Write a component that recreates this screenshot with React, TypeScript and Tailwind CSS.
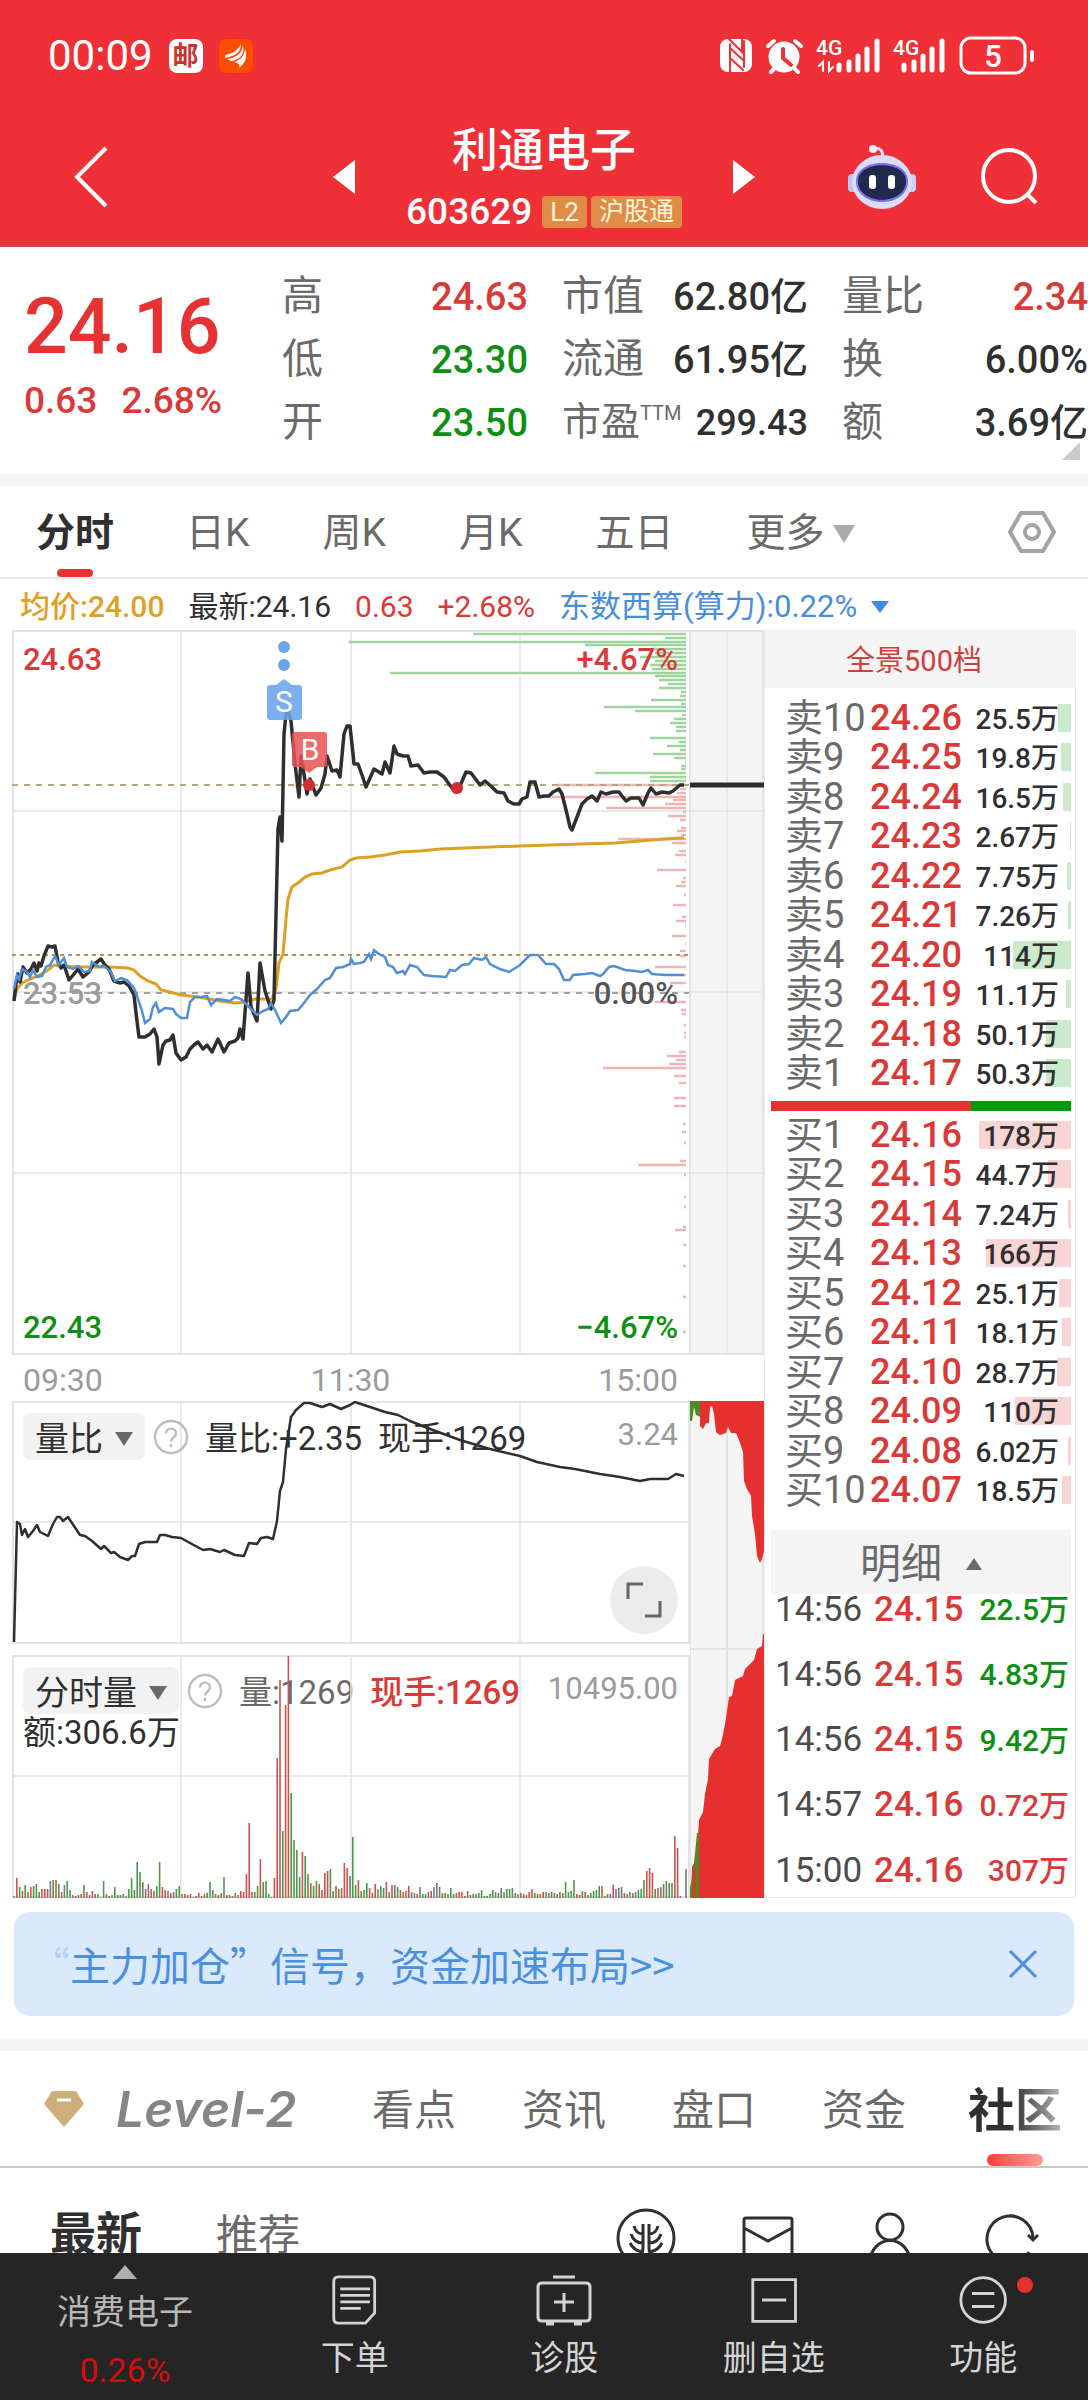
import React from 'react';
import clsx from 'clsx';

type Tone = 'red' | 'green' | 'ink';

const toneClass: Record<Tone, string> = {
  red: 'text-[#d93a38]',
  green: 'text-[#0d8f12]',
  ink: 'text-[#303030]',
};

const quoteColumns: { label: string; sup?: string; value: string; tone: Tone }[][] = [
  [
    { label: '高', value: '24.63', tone: 'red' },
    { label: '低', value: '23.30', tone: 'green' },
    { label: '开', value: '23.50', tone: 'green' },
  ],
  [
    { label: '市值', value: '62.80亿', tone: 'ink' },
    { label: '流通', value: '61.95亿', tone: 'ink' },
    { label: '市盈', sup: 'TTM', value: '299.43', tone: 'ink' },
  ],
  [
    { label: '量比', value: '2.34', tone: 'red' },
    { label: '换', value: '6.00%', tone: 'ink' },
    { label: '额', value: '3.69亿', tone: 'ink' },
  ],
];

// label, price, volume, depth bar width
type Level = [string, string, string, number];

const asks: Level[] = [
  ['卖10', '24.26', '25.5万', 13],
  ['卖9', '24.25', '19.8万', 10],
  ['卖8', '24.24', '16.5万', 8],
  ['卖7', '24.23', '2.67万', 1],
  ['卖6', '24.22', '7.75万', 4],
  ['卖5', '24.21', '7.26万', 3],
  ['卖4', '24.20', '114万', 58],
  ['卖3', '24.19', '11.1万', 5],
  ['卖2', '24.18', '50.1万', 25],
  ['卖1', '24.17', '50.3万', 25],
];

const bids: Level[] = [
  ['买1', '24.16', '178万', 92],
  ['买2', '24.15', '44.7万', 23],
  ['买3', '24.14', '7.24万', 3],
  ['买4', '24.13', '166万', 85],
  ['买5', '24.12', '25.1万', 12],
  ['买6', '24.11', '18.1万', 9],
  ['买7', '24.10', '28.7万', 14],
  ['买8', '24.09', '110万', 56],
  ['买9', '24.08', '6.02万', 3],
  ['买10', '24.07', '18.5万', 9],
];

const trades: [string, string, string, Tone][] = [
  ['14:56', '24.15', '22.5万', 'green'],
  ['14:56', '24.15', '4.83万', 'green'],
  ['14:56', '24.15', '9.42万', 'green'],
  ['14:57', '24.16', '0.72万', 'red'],
  ['15:00', '24.16', '307万', 'red'],
];

const PRICE =
  '14,1002 16,985 18,975 20,983 23,968 27,974 31,970 34,964 37,972 39,964 41,967 44,957 48,947 52,948 55,947 58,963 61,969 64,966 69,981 74,975 78,970 83,978 89,973 93,966 97,963 101,960 105,966 109,970 114,982 120,984 124,983 129,987 134,996 136,1014 139,1038 145,1038 150,1035 154,1030 157,1038 159,1065 163,1046 166,1042 170,1041 173,1036 176,1054 181,1061 186,1058 190,1050 194,1046 198,1043 203,1050 207,1046 212,1053 218,1040 224,1053 229,1044 235,1042 238,1039 240,1030 243,1040 248,974 251,1008 257,1022 260,964 265,992 271,1010 274,1001 278,830 280,818 282,842 284,735 286,715 288,711 291,722 295,765 299,798 301,757 304,775 307,795 310,780 313,788 316,796 321,789 325,775 327,757 332,772 337,771 340,778 344,735 347,727 350,727 353,755 354,765 358,765 362,776 366,788 374,770 382,775 385,763 390,774 394,747 397,755 403,757 408,757 411,767 418,766 424,774 430,773 437,773 444,778 449,785 455,793 460,787 466,773 471,774 480,786 485,782 492,788 497,793 504,794 508,802 514,805 519,805 522,800 527,798 530,783 535,783 539,798 544,797 549,797 553,793 559,790 562,795 567,815 570,828 572,831 577,818 582,805 587,800 592,797 597,802 601,793 606,795 613,793 619,793 622,797 626,802 631,799 639,799 643,806 648,794 651,789 656,795 662,793 669,794 673,792 680,786 684,786';

const AVERAGE =
  '14,1000 17,990 22,984 30,980 40,976 48,971 54,966 60,967 80,968 110,968 128,969 134,971 140,977 148,982 156,985 161,991 170,993 181,996 198,998 210,1000 220,1002 235,1004 245,1003 255,1000 272,1000 276,990 279,964 283,955 286,920 288,900 292,888 298,884 305,878 312,875 322,874 330,871 342,868 350,861 356,859 370,858 385,856 400,853 420,852 440,850 465,849 490,848 520,847 550,846 580,845 615,844 640,842 665,840 680,839 684,839';

const SECTOR =
  '14,990 17,976 19,980 22,970 27,973 30,978 33,971 37,978 42,977 46,968 50,966 55,957 59,966 64,959 67,968 73,970 78,967 84,973 90,972 92,963 99,968 104,967 110,972 115,982 121,979 127,981 134,989 138,1000 142,1012 145,1024 150,1020 153,1008 156,1004 159,1013 165,1009 173,1010 176,1015 181,1019 187,1019 190,1003 195,998 202,998 207,997 211,1006 217,1000 224,1001 230,1002 235,998 241,1000 246,1005 251,1010 257,1016 263,1012 268,1010 271,1004 276,1013 281,1024 286,1018 290,1012 298,1011 304,1004 310,996 317,990 325,981 330,979 336,969 343,968 350,965 351,960 354,965 360,964 364,963 369,955 371,960 374,951 379,955 385,958 388,966 393,968 397,974 403,972 405,975 410,966 417,968 424,976 432,977 446,978 450,971 455,972 462,966 469,965 474,959 482,961 486,958 490,965 500,970 509,973 520,966 530,956 538,956 546,965 554,965 559,970 564,981 570,981 573,976 585,975 592,974 600,977 603,975 609,968 614,967 625,971 635,972 642,973 648,971 652,975 665,976 684,976';

const RATIO =
  '14,1643 17,1523 20,1525 22,1536 25,1530 28,1538 33,1532 37,1526 40,1533 48,1537 53,1525 57,1518 60,1518 63,1522 68,1518 72,1524 80,1536 85,1537 92,1542 101,1550 104,1547 111,1554 114,1553 120,1558 128,1561 132,1557 135,1557 139,1545 145,1543 157,1543 160,1536 165,1536 172,1538 181,1539 190,1544 203,1551 210,1550 220,1553 224,1551 235,1556 244,1557 249,1544 257,1545 261,1539 267,1538 273,1540 277,1522 280,1492 283,1483 286,1450 291,1418 296,1411 304,1404 310,1404 322,1408 330,1405 341,1410 350,1406 355,1403 370,1408 385,1413 398,1416 410,1422 430,1430 460,1441 490,1450 520,1457 537,1463 560,1468 575,1470 600,1475 620,1478 640,1482 650,1480 668,1480 676,1475 684,1477';

// [y, left edge] of each price level in the volume profile
const profileAsk = [
  [635, 473], [639, 665], [643, 349], [646, 585], [650, 650], [654, 655], [658, 640], [662, 655], [666, 650], [670, 652],
  [674, 390], [677, 655], [681, 659], [685, 668], [689, 659], [693, 681], [697, 680], [701, 651], [705, 681], [708, 604],
  [712, 635], [716, 682], [720, 674], [724, 670], [728, 676], [732, 676], [739, 650], [743, 679], [747, 667], [751, 680],
  [755, 653], [759, 674], [763, 685], [767, 681], [770, 681], [774, 595], [778, 650], [782, 650],
];
const profileBid = [
  [786, 556], [790, 680], [794, 677], [798, 552], [801, 673], [805, 665], [809, 606], [813, 683], [817, 668], [821, 680],
  [829, 681], [832, 677], [836, 681], [840, 618], [844, 672], [852, 679], [856, 675], [863, 685], [871, 657], [879, 683],
  [883, 681], [887, 676], [896, 684], [906, 673], [918, 682], [922, 676], [926, 685], [937, 672], [945, 685], [952, 680],
  [957, 680], [968, 655], [976, 683], [984, 670], [1003, 655], [1011, 681], [1015, 682], [1026, 684], [1034, 684], [1038, 684],
  [1053, 679], [1057, 667], [1061, 676], [1065, 669], [1069, 603], [1077, 674], [1084, 679], [1099, 674], [1107, 674], [1125, 683],
  [1133, 682], [1144, 684], [1162, 680], [1166, 638], [1176, 684], [1198, 684], [1208, 684], [1228, 683], [1231, 675], [1246, 683],
  [1267, 683], [1298, 683], [1333, 683],
];

// minute volume: r up, g down, k flat, followed by the bar height
const VOLUME = (
  'g2 r20 g11 r7 g13 g6 r11 g12 g14 g6 r9 r9 r9 k17 g18 r18 g14 r6 k13 g17 g8 r3 r2 k3 r4 g13 r6 k3 r7 k4 g4 r1 g17 k4 r2 g3 g11 k3 k3 g4 k2 ' +
  'g9 g20 k8 g36 g26 k16 k9 r14 k9 r7 g12 g36 r11 r8 k7 r5 k6 g9 g12 k4 r4 k3 r4 k1 r2 r5 k2 r4 g5 g16 g8 r4 r3 g5 g21 r3 k3 r2 g5 r3 r7 r6 ' +
  'r24 r75 r6 g6 g12 r39 g16 g17 g4 g1 r20 r140 r218 g67 r193 r242 g105 g58 g48 g21 r46 g42 g24 r15 g12 g17 r14 r8 r25 r27 g29 g7 r12 g9 r10 ' +
  'r35 r30 k22 g61 g13 r18 g7 g8 g15 r10 r5 r14 g9 k12 g10 r16 g6 r13 k13 g11 r8 g6 r7 r12 g6 k5 r4 k11 g4 g4 k6 r7 k11 k15 k11 r5 g5 g4 g10 ' +
  'g4 r5 r6 r6 g2 r7 g3 k4 g4 g5 g8 k2 g2 g4 g8 k6 g5 k10 g6 g9 g9 k10 g5 r4 g5 r4 k3 r6 r9 g5 r4 g4 r6 k6 g5 r6 k5 g4 r6 g5 g16 g6 g7 g18 ' +
  'r4 r3 g7 r6 k3 g5 g7 g8 g12 r12 r2 g4 k4 r13 k9 k10 k11 r5 k4 g6 k5 k6 g8 g9 g18 r27 r30 r25 g9 r10 g11 k14 k17 g15 g15 r62 r50 r2 k0 k29'
).split(' ');

const volumeColor: Record<string, string> = { r: '#d0504e', g: '#4a9a45', k: '#777777' };

const GRID = '#e3e3e3';

function Row({ level, side }: { level: Level; side: 'ask' | 'bid' }) {
  const [label, price, volume, depth] = level;
  return (
    <div className="relative flex flex-1 items-center pl-5 pr-4 leading-none">
      <div
        className={clsx('absolute right-1 h-7', side === 'ask' ? 'bg-[#cbe9cb]' : 'bg-[#f8d5d5]')}
        style={{ width: depth }}
      />
      <span className="relative w-[85px] whitespace-nowrap text-[38px] text-[#6a6a6a]">{label}</span>
      <span className="relative text-[36px] font-medium text-[#d93a38]">{price}</span>
      <span className="relative ml-auto pt-1 text-[28px] font-medium text-[#303030]">{volume}</span>
    </div>
  );
}

function HelpIcon() {
  return (
    <svg viewBox="0 0 36 36" className="size-9 shrink-0" fill="none" stroke="#bdbdbd" strokeWidth="2.4">
      <circle cx="18" cy="18" r="16" />
      <path d="M13 14.5c0-6.5 10-6.5 10 0 0 4-5 4-5 8" />
      <path d="M18 25v3" />
    </svg>
  );
}

function StatusBar() {
  return (
    <div className="flex h-[112px] items-center pl-12 pr-[54px] text-white">
      <span className="text-[42px] leading-none">00:09</span>
      <span className="ml-4 flex size-[34px] items-center justify-center rounded-lg bg-white text-[26px] font-bold leading-none text-[#c8322f]">邮</span>
      <svg viewBox="0 0 34 34" className="ml-4 size-[34px]">
        <rect width="34" height="34" rx="8" fill="#ff4d00" />
        <path d="M6 16C13 15 18 12 22 5c0 7-4 12-16 14zM8 20c9-1 14-5 16-13 2 9-4 14-12 15zM15 23c7-2 10-6 11-13 3 9 0 14-6 19 1-3 0-5-5-6z" fill="#fff" />
      </svg>
      <svg viewBox="0 0 310 40" className="ml-auto h-10 w-[310px]" fill="none" stroke="#fff" strokeLinecap="round">
        <rect x="2" y="3" width="32" height="33" rx="8" fill="#fff" stroke="none" />
        <path d="M11 3L24 16V3M12 36V8M26 31V5M12 12l14 13M12 22l13 12" stroke="#f03037" strokeWidth="2" />
        <circle cx="66" cy="21" r="14" fill="#fff" strokeWidth="3" />
        <path d="M50 10l6-5M83 10l-6-5M56 33l-3 3M77 33l3 3" strokeWidth="4" />
        <path d="M65 13v9l8 7" stroke="#f03037" strokeWidth="4" />
        <path d="M121 29v5M131 26v8M140 20v14M149 13v21M159 5v29" strokeWidth="5" />
        <path d="M105 35V26l-4 4M111 26v9l4-4" strokeWidth="2" />
        <text x="98" y="19" fontSize="21" fontWeight="500" fill="#fff" stroke="none">4G</text>
        <path d="M186 29v5M196 26v8M205 20v14M214 13v21M224 5v29" strokeWidth="5" />
        <text x="175" y="19" fontSize="21" fontWeight="500" fill="#fff" stroke="none">4G</text>
        <rect x="243" y="2" width="64" height="35" rx="10" strokeWidth="3" />
        <text x="275" y="31" fontSize="31" fontWeight="500" textAnchor="middle" fill="#fff" stroke="none">5</text>
      </svg>
      <i className="ml-0.5 h-3 w-1 rounded-full bg-white" />
    </div>
  );
}

function TopBar() {
  return (
    <header className="relative flex h-[135px] items-center justify-between border-b-2 border-[#c9494b] pb-1 pl-[72px] pr-[48px] text-white">
      <button aria-label="返回">
        <svg viewBox="0 0 40 64" className="h-16 w-10" fill="none" stroke="#fff" strokeWidth="4">
          <path d="M34 3L5 32l29 29" />
        </svg>
      </button>
      <div className="absolute inset-x-0 flex items-center justify-center gap-[51px]">
        <button aria-label="上一只">
          <svg viewBox="0 0 22 34" className="h-[34px] w-[22px]" fill="#fff"><path d="M22 0v34L0 17z" /></svg>
        </button>
        <div className="flex flex-col items-center gap-5 pt-1 leading-none">
          <h1 className="text-[46px] font-medium">利通电子</h1>
          <div className="flex items-center gap-1">
            <span className="mr-1.5 text-[37px] font-medium">603629</span>
            <span className="flex h-8 items-center rounded-sm bg-[#e08c48] px-2 text-[26px] text-[#fff4dc]">L2</span>
            <span className="flex h-8 items-center rounded-sm bg-[#e08c48] px-2 text-[25px] text-[#fff4dc]">沪股通</span>
          </div>
        </div>
        <button aria-label="下一只">
          <svg viewBox="0 0 22 34" className="h-[34px] w-[22px]" fill="#fff"><path d="M0 0v34l22-17z" /></svg>
        </button>
      </div>
      <div className="relative flex items-center gap-[62px]">
        <button aria-label="智能助手">
          <svg viewBox="0 0 72 68" className="h-[68px] w-[72px]">
            <path d="M28 6c6-2 9 2 9 8" fill="none" stroke="#e9e6ff" strokeWidth="3" strokeLinecap="round" />
            <circle cx="27" cy="6" r="4" fill="#f1efff" />
            <rect x="2" y="31" width="9" height="18" rx="4" fill="#b9c6f5" />
            <rect x="61" y="31" width="9" height="18" rx="4" fill="#cbd0fa" />
            <ellipse cx="36" cy="39" rx="30" ry="27" fill="#dcdcfb" />
            <path d="M10 38c0-24 52-24 52 0 0 28-52 28-52 0z" fill="#7a6ff0" />
            <path d="M12 38c0-21 48-21 48 0 0 25-48 25-48 0z" fill="#202a4e" />
            <rect x="23" y="32" width="7" height="14" rx="3" fill="#fff" />
            <rect x="42" y="32" width="7" height="14" rx="3" fill="#fff" />
          </svg>
        </button>
        <button aria-label="搜索">
          <svg viewBox="0 0 60 60" className="size-[60px]" fill="none" stroke="#fff" strokeWidth="4">
            <circle cx="29" cy="29" r="26" />
            <path d="M47 47l9 9" />
          </svg>
        </button>
      </div>
    </header>
  );
}

function Quote() {
  return (
    <section className="relative flex h-[227px] gap-[34px] pl-6 leading-none">
      <div className="w-[224px] shrink-0 pt-[42px]">
        <div className="text-[77px] font-medium text-[#e63233]">24.16</div>
        <div className="mt-4 flex gap-6 text-[37px] font-medium text-[#d93a38]">
          <span>0.63</span>
          <span>2.68%</span>
        </div>
      </div>
      {quoteColumns.map((column) => (
        <dl key={column[0].label} className="flex flex-1 flex-col pt-[18px]">
          {column.map((item) => (
            <div key={item.label} className="flex h-[63px] items-center justify-between whitespace-nowrap">
              <dt className={clsx('flex text-[#6a6a6a]', item.sup ? 'text-[39px]' : 'text-[41px]')}>
                {item.label}
                {item.sup && <span className="text-[20px]">{item.sup}</span>}
              </dt>
              <dd className={clsx('font-medium', toneClass[item.tone], item.sup ? 'text-[36px]' : 'text-[38px]')}>{item.value}</dd>
            </div>
          ))}
        </dl>
      ))}
      <svg viewBox="0 0 18 18" className="absolute bottom-3.5 right-2 size-[18px]" fill="#cccccc"><path d="M18 0v18H0z" /></svg>
    </section>
  );
}

function PeriodTabs() {
  return (
    <nav className="flex h-[93px] items-center border-b-2 border-[#e8e8e8] pl-9 pr-8 text-[39px] leading-none text-[#6a6a6a]">
      <button className="relative flex h-full items-center pt-1 font-bold text-[#303030]">
        分时
        <i className="absolute bottom-0 left-1/2 h-2 w-9 -translate-x-1/2 rounded-full bg-[#e63233]" />
      </button>
      <div className="ml-[72px] flex gap-[73px] pt-1">
        <button>日K</button>
        <button>周K</button>
        <button>月K</button>
        <button>五日</button>
        <button className="flex items-center gap-2">
          更多
          <svg viewBox="0 0 22 18" className="h-[18px] w-[22px]" fill="#aaaaaa"><path d="M0 0h22L11 18z" /></svg>
        </button>
      </div>
      <button className="ml-auto" aria-label="设置">
        <svg viewBox="0 0 48 44" className="h-11 w-12" fill="none" stroke="#a3a3a3" strokeWidth="4" strokeLinejoin="round">
          <path d="M13 3h22l11 19-11 19H13L2 22z" />
          <circle cx="24" cy="22" r="7" />
        </svg>
      </button>
    </nav>
  );
}

function MainChart() {
  return (
    <div className="relative h-[725px] text-[31px] font-medium leading-none">
      <svg viewBox="12 631 752 725" preserveAspectRatio="none" className="h-full w-full" fill="none">
        <rect x="690" y="631" width="74" height="725" fill="#f4f4f4" />
        <path d="M181 631v724M351 631v724M520 631v724M727 631v724M12 812h752M12 993h752M12 1174h752" stroke={GRID} strokeWidth="1.500" />
        <path d="M12 632h752M12 1355h752M13 631v724M690 631v724M763 631v724" stroke={GRID} strokeWidth="2" />
        {profileAsk.map(([y, x]) => <path key={y} d={`M${x} ${y}H686`} stroke="#9fd49f" strokeWidth="2.500" />)}
        {profileBid.map(([y, x]) => <path key={y} d={`M${x} ${y}H686`} stroke="#efb4b4" strokeWidth="2.500" />)}
        <path d="M12 786h677" stroke="#b8a67c" strokeWidth="2" strokeDasharray="6 6" />
        <path d="M12 956h677" stroke="#c08c55" strokeWidth="2" strokeDasharray="4 4" />
        <path d="M24 994h665" stroke="#a0a0a0" strokeWidth="2" strokeDasharray="6 6" />
        <polyline points={AVERAGE} stroke="#dda024" strokeWidth="3" />
        <polyline points={PRICE} stroke="#2f2f2f" strokeWidth="3.500" strokeLinejoin="round" />
        <polyline points={SECTOR} stroke="#4f8fd8" strokeWidth="2.500" />
        <path d="M690 786h74" stroke="#2c2c2c" strokeWidth="5" />
        <g fill="#6ba4ed">
          <circle cx="284" cy="648" r="6" />
          <circle cx="284" cy="666" r="6" />
          <path d="M276 686l8-6 8 6h7q3 0 3 3v29q0 3-3 3h-29q-3 0-3-3v-29q0-3 3-3z" opacity=".88" />
        </g>
        <path d="M295 733h29q3 0 3 3v29q0 3-3 3h-7l-8 6-8-6h-6q-3 0-3-3v-29q0-3 3-3z" fill="#e95455" opacity=".86" />
        <circle cx="309" cy="786" r="6" fill="#d02f2f" />
        <circle cx="457" cy="789" r="6" fill="#d02f2f" />
        <text x="284" y="713" fontSize="30" fontWeight="400" textAnchor="middle" fill="#fff">S</text>
        <text x="310" y="761" fontSize="30" fontWeight="400" textAnchor="middle" fill="#fff">B</text>
      </svg>
      <div className="absolute inset-y-0 left-[11px] flex flex-col justify-between pb-3 pt-3.5">
        <span className="text-[#d93a38]">24.63</span>
        <span className="text-[#9b9b9b]">23.53</span>
        <span className="text-[#0d8f12]">22.43</span>
      </div>
      <div className="absolute inset-y-0 right-[86px] flex flex-col items-end justify-between pb-3 pt-3.5">
        <span className="text-[#d93a38]">+4.67%</span>
        <span className="text-[#555555]">0.00%</span>
        <span className="text-[#0d8f12]">−4.67%</span>
      </div>
    </div>
  );
}

function IndicatorHead({ name, children, max }: { name: string; children: React.ReactNode; max: string }) {
  return (
    <div className="absolute inset-x-0 top-3 flex items-start pl-[11px] pr-3">
      <div className="flex items-center gap-2">
        <button className="flex h-[47px] items-center gap-3 whitespace-nowrap rounded-lg bg-[#f2f2f2] px-3 pt-1 text-[34px]">
          {name}
          <svg viewBox="0 0 18 14" className="h-3.5 w-[18px]" fill="#6a6a6a"><path d="M0 0h18L9 14z" /></svg>
        </button>
        <HelpIcon />
        <div className="flex gap-4 whitespace-nowrap pl-2 pt-1">{children}</div>
      </div>
      <span className="ml-auto pt-1.5 text-[31px] text-[#9b9b9b]">{max}</span>
    </div>
  );
}

function SubCharts() {
  return (
    <div className="flex h-[497px] text-[33px] leading-none text-[#303030]">
      <div className="flex min-w-0 flex-1 flex-col justify-between">
        <div className="relative h-[243px]">
          <svg viewBox="12 1402 678 243" preserveAspectRatio="none" className="h-full w-full" fill="none">
            <path d="M181 1402v242M351 1402v242M520 1402v242M12 1523h678" stroke={GRID} strokeWidth="1.500" />
            <path d="M12 1403h678M12 1644h678M13 1402v243M689 1402v243" stroke={GRID} strokeWidth="2" />
          </svg>
          <IndicatorHead name="量比" max="3.24">
            <span>量比:+2.35</span>
            <span>现手:1269</span>
          </IndicatorHead>
          <svg viewBox="12 1402 678 243" preserveAspectRatio="none" className="pointer-events-none absolute inset-0 h-full w-full" fill="none">
            <polyline points={RATIO} stroke="#2f2f2f" strokeWidth="2.500" strokeLinejoin="round" />
          </svg>
          <button aria-label="全屏" className="absolute bottom-2.5 right-3 flex size-[68px] items-center justify-center rounded-full bg-[#ececec]">
            <svg viewBox="0 0 36 36" className="size-9" fill="none" stroke="#666666" strokeWidth="3">
              <path d="M2 17V2h15M34 19v15H19" />
            </svg>
          </button>
        </div>
        <div className="relative h-[243px]">
          <IndicatorHead name="分时量" max="10495.00">
            <span className="text-[#6a6a6a]">量:1269</span>
            <span className="font-medium text-[#d93a38]">现手:1269</span>
          </IndicatorHead>
          <div className="absolute left-[11px] top-[61px]">额:306.6万</div>
          <svg viewBox="12 1656 678 243" preserveAspectRatio="none" className="pointer-events-none absolute inset-0 h-full w-full" fill="none">
            <path d="M181 1657v241M351 1657v241M520 1657v241M12 1777h678" stroke={GRID} strokeWidth="1.500" />
            <path d="M12 1657h678M12 1898h678M13 1656v243M689 1656v243" stroke={GRID} strokeWidth="2" />
            {VOLUME.map((bar, i) => (
              <path key={i} d={`M${14 + i * 2.8} 1899v-${bar.slice(1)}`} stroke={volumeColor[bar[0]]} strokeWidth="1.600" />
            ))}
          </svg>
        </div>
      </div>
      <svg viewBox="690 1402 74 497" preserveAspectRatio="none" className="h-full w-[74px] shrink-0" fill="none">
        <path d="M690 1402h74v497h-74z" fill="#f4f4f4" />
        <path d="M727 1402v497M690 1650h74" stroke={GRID} strokeWidth="2" />
        <path d="M690 1402v497M763 1402v497" stroke={GRID} strokeWidth="2" />
        <path d="M690 1402h11v16l-5-2-2-8-2 14h-2z" fill="#4a8e22" />
        <path d="M700 1402v25l3 3 3-6h3l1-16 2-1 2 8 2 18 4 3 6-2 2-6 3 6h5l3 7 4 12 1 29 3 8 4 7 1 20 3 18 2 22 3 7 2-4 2-8v-150z" fill="#e63030" />
        <path d="M764 1635h-1l-1 12-5 3-3 11-9 9-2 7-8 4-3 16-3 1-2 14-2 13-3 15-2 7-5 3-6 10-1 20-3 15-2 18-4 8-1 16-2 23-4 8-1 31h73z" fill="#e63030" />
        <path d="M690 1899v-10l3-15 4-40h2v65z" fill="#5c8420" />
        <path d="M692 1870h4v29h-4z" fill="#b0502a" />
      </svg>
    </div>
  );
}

function OrderBook() {
  return (
    <aside className="flex w-[312px] shrink-0 flex-col border border-[#ececec]">
      <button className="h-[57px] shrink-0 bg-[#f4f4f4] pr-3 pt-1 text-[29px] leading-none text-[#cf3f3d]">全景500档</button>
      <div className="mt-2.5 flex h-[395px] flex-col">
        {asks.map((level) => <Row key={level[0]} level={level} side="ask" />)}
      </div>
      <div className="ml-1.5 mr-1 mt-2 flex h-2.5">
        <div className="flex-2 bg-[#e63230]" />
        <div className="flex-1 bg-[#029a05]" />
      </div>
      <div className="mt-1 flex h-[395px] flex-col">
        {bids.map((level) => <Row key={level[0]} level={level} side="bid" />)}
      </div>
      <button className="ml-1.5 mr-1 mt-5 flex h-16 shrink-0 items-center justify-center gap-6 bg-[#f4f4f4] pt-1 text-[41px] leading-none text-[#6a6a6a]">
        明细
        <svg viewBox="0 0 16 12" className="h-3 w-4" fill="#6a6a6a"><path d="M8 0l8 12H0z" /></svg>
      </button>
      <div className="flex h-[303px] flex-col justify-between pb-3">
        {trades.map(([time, price, volume, tone], i) => (
          <div key={i} className="flex h-[30px] items-center pl-2.5 pr-1.5 leading-none">
            <span className="w-[99px] text-[35px] text-[#4c4c4c]">{time}</span>
            <span className="text-[35px] font-medium text-[#d93a38]">{price}</span>
            <span className={clsx('ml-auto pt-0.5 text-[30px] font-medium', toneClass[tone])}>{volume}</span>
          </div>
        ))}
      </div>
    </aside>
  );
}

function SectionTabs() {
  return (
    <nav className="flex h-[117px] items-center border-b-2 border-[#c8c8c8] pl-11 pr-[26px] text-[42px] leading-none text-[#6a6a6a]">
      <button className="flex items-center">
        <svg viewBox="0 0 40 36" className="h-9 w-10">
          <path d="M8 0h24l8 13-20 23L0 13z" fill="#d0ae7c" />
          <path d="M13 9h14" stroke="#fff" strokeWidth="3" />
        </svg>
        <span className="ml-8 w-[190px] whitespace-nowrap text-left font-['Inter',sans-serif] text-[50px] font-semibold italic text-[#858585]">Level-2</span>
      </button>
      <div className="ml-[66px] flex gap-[66px] pt-1">
        <button>看点</button>
        <button>资讯</button>
        <button>盘口</button>
        <button>资金</button>
      </div>
      <button className="relative ml-auto flex h-full items-center pt-1 text-[47px] font-bold">
        <span className="bg-linear-to-r from-[#303030] from-45% to-[#b8b8b8] bg-clip-text text-transparent">社区</span>
        <i className="absolute bottom-0 left-1/2 h-3 w-14 -translate-x-1/2 rounded-full bg-linear-to-r from-[#fb3a33] to-[#fd9a98]" />
      </button>
    </nav>
  );
}

function FeedBar() {
  return (
    <div className="flex h-[85px] justify-between overflow-hidden pl-[50px] pr-[46px] leading-none">
      <div className="flex items-start gap-[74px] pt-[43px]">
        <button className="text-[46px] font-bold text-[#303030]">最新</button>
        <button className="pt-1 text-[42px] text-[#6a6a6a]">推荐</button>
      </div>
      <div className="grid grid-cols-4 items-start gap-[62px] pt-10 text-[#303030]">
        <button aria-label="发现">
          <svg viewBox="0 0 60 60" className="size-[60px]" fill="none" stroke="currentColor" strokeWidth="3">
            <circle cx="30" cy="30" r="28" />
            <path d="M27 16v24q0 7-7 10M33 16v24q0 7 7 10M27 26q-7 0-9-8M27 35q-9 0-12-9M27 44q-9-1-13-9M33 26q7 0 9-8M33 35q9 0 12-9M33 44q9-1 13-9" />
          </svg>
        </button>
        <button aria-label="私信" className="flex justify-center pt-2">
          <svg viewBox="0 0 52 48" className="h-12 w-[52px]" fill="none" stroke="currentColor" strokeWidth="3">
            <rect x="2" y="2" width="48" height="40" rx="2" />
            <path d="M2 12l24 13 24-13" />
          </svg>
        </button>
        <button aria-label="我的" className="flex justify-center pt-1">
          <svg viewBox="0 0 50 54" className="h-[54px] w-[50px]" fill="none" stroke="currentColor" strokeWidth="3">
            <circle cx="25" cy="15" r="13" />
            <path d="M4 54c1-34 41-34 42 0" />
          </svg>
        </button>
        <button aria-label="刷新" className="flex justify-center pt-1">
          <svg viewBox="0 0 54 54" className="size-[54px]" fill="none" stroke="currentColor" strokeWidth="3">
            <path d="M48 26A23 23 0 1 0 44 40" />
            <path d="M43 23l5 5 5-5" />
          </svg>
        </button>
      </div>
    </div>
  );
}

function BottomNav() {
  const items = [
    {
      label: '下单',
      icon: <path d="M8 2h34q5 0 5 5v34l-10 11H8q-5 0-5-5V7q0-5 5-5zM10 15h32M10 22h32M10 29h32M10 36h22" />,
    },
    {
      label: '诊股',
      icon: <path d="M17 4h22M6 10h44q4 0 4 4v30q0 4-4 4H6q-4 0-4-4V14q0-4 4-4zM28 20v19M18 29h20M10 51h8M38 51h8" />,
    },
    { label: '删自选', icon: <path d="M3 5h46v45H3zM13 27h26" /> },
    { label: '功能', icon: <><circle cx="26" cy="27" r="24" /><path d="M14 20h24M14 34h24" /></> },
  ];
  return (
    <footer className="flex h-[147px] bg-[#252525] text-[34px] leading-none text-[#d4d4d4]">
      <button className="flex w-[250px] flex-col items-center pt-3 text-[#b8b8b8]">
        <svg viewBox="0 0 24 14" className="h-3.5 w-6" fill="#b0b0b0"><path d="M12 0l12 14H0z" /></svg>
        <span className="mt-4">消费电子</span>
        <span className="mt-6 text-[#d30e0e]">0.26%</span>
      </button>
      {items.map(({ label, icon }) => (
        <button key={label} className="relative flex flex-1 flex-col items-center pt-5">
          <svg viewBox="0 0 56 54" className={clsx('h-[54px] w-14', label !== '诊股' && 'pl-1')} fill="none" stroke="currentColor" strokeWidth="3">
            {icon}
          </svg>
          <span className="mt-3.5">{label}</span>
          {label === '功能' && <i className="absolute left-[138px] top-6 size-4 rounded-full bg-[#e83030]" />}
        </button>
      ))}
    </footer>
  );
}

export default function App() {
  return (
    <main className="w-full overflow-x-hidden bg-white font-['Roboto','Noto_Sans_CJK_SC',sans-serif]">
      <div className="bg-[#f03037]">
        <StatusBar />
        <TopBar />
      </div>
      <Quote />
      <div className="h-3 bg-[#f4f4f4]" />
      <PeriodTabs />
      <div className="flex h-[51px] items-center gap-6 whitespace-nowrap pl-5 pt-1 text-[30px] leading-none">
        <span className="font-medium text-[#dda024]">均价:24.00</span>
        <span className="text-[#303030]">最新:24.16</span>
        <span className="text-[#d93a38]">0.63</span>
        <span className="text-[#d93a38]">+2.68%</span>
        <button className="flex items-center gap-3.5 text-[31px] text-[#4a8ed9]">
          东数西算(算力):0.22%
          <svg viewBox="0 0 18 12" className="h-3 w-[18px]" fill="#3f8be6"><path d="M0 0h18L9 12z" /></svg>
        </button>
      </div>
      <section className="flex px-3">
        <div className="min-w-0 flex-1">
          <MainChart />
          <div className="flex h-[46px] items-center justify-between pl-[11px] pr-[86px] pt-1 text-[32px] leading-none text-[#9b9b9b]">
            <span>09:30</span>
            <span>11:30</span>
            <span>15:00</span>
          </div>
          <SubCharts />
        </div>
        <OrderBook />
      </section>
      <div className="mx-3.5 mt-3.5 flex h-[104px] items-center justify-between rounded-2xl bg-[#dae9fb] pl-4 pr-9 text-[#4a90dd]">
        <a href="#signal" className="whitespace-nowrap font-['Noto_Sans_CJK_SC',sans-serif] text-[40px] leading-none">
          <span className="text-[#b5d3f5]">“</span>主力加仓”信号，资金加速布局&gt;&gt;
        </a>
        <button aria-label="关闭">
          <svg viewBox="0 0 30 30" className="size-[30px]" fill="none" stroke="currentColor" strokeWidth="3"><path d="M2 2l26 26M28 2L2 28" /></svg>
        </button>
      </div>
      <div className="mt-[23px] h-3 bg-[#f4f4f4]" />
      <SectionTabs />
      <FeedBar />
      <BottomNav />
    </main>
  );
}
